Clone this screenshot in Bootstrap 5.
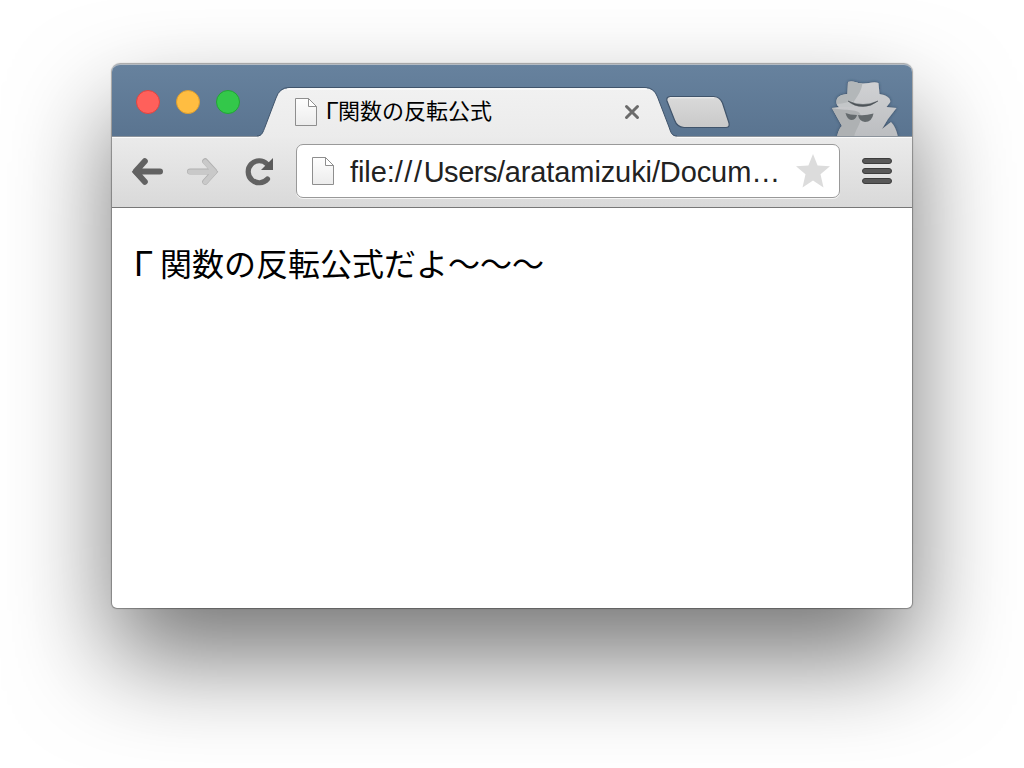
<!DOCTYPE html>
<html lang="ja">
<head>
<meta charset="utf-8">
<meta name="viewport" content="width=device-width, initial-scale=1">
<title>Γ関数の反転公式</title>
<link href="https://cdn.jsdelivr.net/npm/bootstrap@5.3.0/dist/css/bootstrap.min.css" rel="stylesheet">
<style>
body{background:#fff;height:768px;overflow:hidden;padding:64px 112px 0;font-family:"Liberation Sans","Noto Sans CJK JP",sans-serif;color:#000}
.window{width:800px;height:544px;border-radius:8px 8px 5px 5px;background:#fff;box-shadow:0 0 1px 1px rgba(0,0,0,.32),0 50px 100px rgba(0,0,0,.54)}
.titlebar{height:72px;background:linear-gradient(#67829e,#5a7490);border-radius:8px 8px 0 0;box-shadow:inset 0 2px 0 -1px #b4bbc3;padding-left:24px}
.light{width:24px;height:24px;border-radius:50%;border:1px solid}
.light-close{background:#ff605b;border-color:#e0443f}
.light-min{background:#ffbd41;border-color:#dd9d2f}
.light-max{background:#33c84a;border-color:#22a535}
.tab{width:420px;height:50px;margin:22px 0 0 17px;padding:0 38px 0 37px}
.tab-shape{left:0;top:0}
.tab-title{font-size:22px;line-height:32px;margin-left:8px;position:relative;white-space:nowrap}
.title-gamma{font-family:Inter,"Liberation Sans",sans-serif;font-size:22.5px;width:12px;line-height:30px}
.new-tab{margin:31px 0 0 -13px}
.toolbar{height:72px;background:linear-gradient(#ebebeb,#d9d9d9);border-bottom:1px solid #777;box-shadow:inset 0 1px 0 #8d949c,inset 0 2px 0 #fbfbfb;padding:8px 19px 9px 19px}
.address{width:544px;height:54px;margin-left:19px;background:#fff;border:1px solid #999;border-radius:7px;box-shadow:0 1px 0 #f5f5f5;padding:0 9px 0 14px}
.url{font-size:29px;line-height:34px;padding-top:2px;color:#222;margin-left:15px;white-space:nowrap;letter-spacing:-.1px}
.slashes{letter-spacing:1.6px}
.host{letter-spacing:-.45px}
.content{padding:37px 16px 0;font-size:32px;line-height:40px}
.content p{white-space:nowrap}
.gamma{width:32px;padding-left:6px;font-family:Inter,"Liberation Sans",sans-serif;font-size:34px;line-height:38px}
svg{display:block;flex:none}
</style>
</head>
<body>
<svg width="0" height="0" class="position-absolute" aria-hidden="true">
<defs>
<linearGradient id="paper" x2="0" y2="1"><stop stop-color="#fefefe"/><stop offset="1" stop-color="#ececec"/></linearGradient>
<linearGradient id="tabfill" x2="0" y2="1"><stop stop-color="#f1f1f1"/><stop offset="1" stop-color="#ebebeb"/></linearGradient>
<linearGradient id="newfill" x2="0" y2="1"><stop stop-color="#dadada"/><stop offset="1" stop-color="#c9c9c9"/></linearGradient>
<symbol id="page" viewBox="0 0 24 30"><path d="M1.500 1.500H14.500L22.500 9.500V28.500H1.500Z" fill="url(#paper)" stroke="#8e8e8e"/><path d="M14.500 1.500V9.500H22.500Z" fill="#fff" stroke="#8e8e8e"/></symbol>
</defs>
</svg>
<main class="window">
  <header class="titlebar d-flex">
    <div class="d-flex" style="gap:16px;margin-top:26px">
      <span class="light light-close"></span><span class="light light-min"></span><span class="light light-max"></span>
    </div>
    <div class="tab d-flex position-relative">
      <svg class="tab-shape position-absolute" width="420" height="52" viewBox="257 86 420 52">
        <path d="M257 136.500C262 136.500 263 132 265 127L276 98Q279.500 88 289 88H645Q654 88 657.500 97L669 127C671 133 672 136.500 677 136.500V139H257Z" fill="url(#tabfill)"/>
        <path d="M257 136C262 136 263 132 265 127L276 98Q279.500 87.500 289 87.500H645Q654 87.500 657.500 97L669 127C671 133 672 136 677 136" fill="none" stroke="#40546b"/>
        <path d="M287 89H647" stroke="#fff"/>
      </svg>
      <svg class="position-relative" width="24" height="30" style="margin-top:11px"><use href="#page"/></svg>
      <span class="tab-title" style="margin-top:10px"><span class="title-gamma d-inline-block">Γ</span>関数の反転公式</span>
      <svg class="ms-auto position-relative" width="18" height="18" viewBox="0 0 18 18" style="margin-top:17px;margin-right:-2px"><path d="M3.500 3.500L14.500 14.500M14.500 3.500L3.500 14.500" stroke="#6b6b6b" stroke-width="3" stroke-linecap="round"/></svg>
    </div>
    <svg class="new-tab" width="68" height="36" viewBox="664 95 68 36"><path d="M670 96.500H714Q720 97 722.500 103L729 123Q730 127.500 726 127.500H684Q677 127 674.500 120L667 101Q666 97 670 96.500Z" fill="url(#newfill)" stroke="#40546b" stroke-width="1.200"/><path d="M670 97.800H714" stroke="#eee"/></svg>
    <svg class="ms-auto" width="72" height="58" viewBox="829 78 72 58" style="margin-top:14px;margin-right:11px">
      <defs>
        <linearGradient id="coat" x2="0" y2="1"><stop stop-color="#d2d3d5"/><stop offset="1" stop-color="#bbbdc0"/></linearGradient>
        <filter id="glow" x="-20%" y="-20%" width="140%" height="140%"><feDropShadow dx="0" dy="0" stdDeviation="1.500" flood-color="#26394d" flood-opacity=".8"/></filter>
        <clipPath id="spy"><path d="M848 82C853 80 858 84 863 83.500C869 83.500 874 81 878.500 83L879.500 94C887 95 891.500 99 890 102.500L886.500 107L896.500 108L888 119L882 129L891 122Q896 127 898 137H837Q838.500 129 842 126L832 108L839.500 107C836.500 106 835.500 101 837.500 98C840 95 844 94.500 847.500 94Z"/></clipPath>
      </defs>
      <g filter="url(#glow)"><g clip-path="url(#spy)">
        <path d="M829 78H902V138H829Z" fill="url(#coat)"/>
        <path d="M829 78H862C864 88 858 95 853 103Q846 107 839 105H829Z" fill="#b3b7b9"/>
        <path d="M836 104C845 104 849 101 853 101V107H836Z" fill="#c3c6c8"/>
        <path d="M829 107C843 112 860 107 861 116C861 125 855 129 854 138H829Z" fill="#aeb1b3"/>
      </g></g>
      <path d="M848 101Q863 108 878 101Q871 106.500 863 106.500Q854 106.500 848 101Z" fill="#4d5358" stroke="#4d5358" stroke-width=".5"/>
      <path d="M845.500 113Q850 115 857 115Q856 120 851 120Q847 119 845.500 113ZM858 115Q865 116 873.500 113.500Q872 122 865 122Q859 121 858 115Z" fill="#646a6d"/>
    </svg>
  </header>
  <nav class="toolbar d-flex align-items-center">
    <svg width="34" height="32" viewBox="131 155 34 32" stroke="#626262" stroke-linecap="round" stroke-linejoin="round"><path d="M144.800 161.200L135.500 171.500L144.800 181.800M136 171.500H160" fill="none" stroke-width="6"/><path d="M132.800 171.500L140 164V179Z" fill="#626262" stroke-width="1"/></svg>
    <svg width="34" height="32" viewBox="186 155 34 32" style="margin-left:21px" fill="none" stroke-linecap="round" stroke-linejoin="round"><g stroke="#b0b0b0" stroke-width="6"><path d="M205.200 161.200L214.500 171.500L205.200 181.800M213 171.500H190"/></g><path d="M217.200 171.500L210 164V179Z" fill="#b0b0b0" stroke="#b0b0b0"/><g stroke="#c9c9c9" stroke-width="4.800"><path d="M205.200 161.800L214.500 171.800L205.200 182M213 171.800H190"/></g><path d="M216.500 171.800L210 165V178.500Z" fill="#c9c9c9"/></svg>
    <svg width="34" height="32" viewBox="243 155 34 32" style="margin-left:23px"><path d="M267.500 179A11 11 0 1 1 267 164" fill="none" stroke="#626262" stroke-width="5.200" stroke-linecap="round"/><path d="M273 158V170H261Z" fill="#5a5a5a"/></svg>
    <div class="address d-flex align-items-center">
      <svg width="24" height="32" viewBox="0 0 24 31"><use href="#page" width="24" height="31"/></svg>
      <span class="url">file:<span class="slashes">///</span><span class="host">Users/</span>aratamizuki/Docum…</span>
      <svg class="ms-auto" width="34" height="34" viewBox="0 0 34 34"><path d="M17 0L21.600 11.500L34 12.300L24.500 20.300L27.500 33.500L17 26.500L6.500 33.500L9.500 20.300L0 12.300L12.400 11.500Z" fill="#dcdcdc"/></svg>
    </div>
    <svg class="ms-auto" width="32" height="28" viewBox="0 0 32 28"><g fill="#585858" stroke="#3d3d3d"><rect x="1.500" y="1.500" width="29" height="5" rx="2.500"/><rect x="1.500" y="11.500" width="29" height="5" rx="2.500"/><rect x="1.500" y="21.500" width="29" height="5" rx="2.500"/></g></svg>
  </nav>
  <section class="content"><p class="mb-0"><span class="gamma d-inline-block">Γ</span>関数の反転公式だよ〜〜〜</p></section>
</main>
<script src="https://cdn.jsdelivr.net/npm/bootstrap@5.3.0/dist/js/bootstrap.bundle.min.js"></script>
</body>
</html>
